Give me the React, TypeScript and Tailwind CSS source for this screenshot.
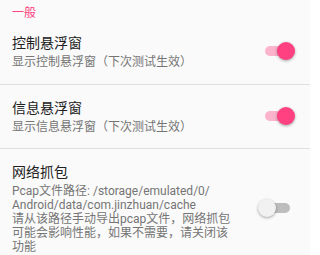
import type { ReactNode } from "react";

function Interruptor({ on }: { on: boolean }) {
  return (
    <div className="relative h-[20px] w-[38px] shrink-0">
      <div
        className={
          "absolute left-[8px] top-[5px] h-[10px] w-[25px] rounded-full " +
          (on ? "bg-[#fcb3cc]" : "bg-[#bdbdbd]")
        }
      />
      <div
        className={
          "absolute top-[1px] h-[18px] w-[18px] rounded-full shadow-[0_1px_3px_rgba(0,0,0,0.35)] " +
          (on ? "left-[20px] bg-[#ff4081]" : "left-[1px] bg-[#f1f1f1]")
        }
      />
    </div>
  );
}

function Preferencia({
  titulo,
  children,
  on,
  className,
}: {
  titulo: string;
  children: ReactNode;
  on: boolean;
  className: string;
}) {
  return (
    <div className={"flex items-center pl-[12px] pr-[15px] " + className}>
      <div className="flex-1">
        <div className="text-[14px] leading-[20px] text-[#212121]">{titulo}</div>
        <div className="mt-[2px] text-[12px] leading-[14px] text-[#757575]">{children}</div>
      </div>
      <Interruptor on={on} />
    </div>
  );
}

export default function App() {
  return (
    <div className="h-[255px] w-[310px] overflow-hidden bg-[#fafafa] font-['Roboto','Noto_Sans_CJK_SC',sans-serif]">
      <div className="pl-[12px] pt-[6px] text-[12px] leading-[14px] text-[#ff4081]">一般</div>
      <Preferencia titulo="控制悬浮窗" on className="pt-[13px] pb-[15px]">
        显示控制悬浮窗（下次测试生效）
      </Preferencia>
      <div className="h-px bg-[#e0e0e0]" />
      <Preferencia titulo="信息悬浮窗" on className="pt-[13px] pb-[14px]">
        显示信息悬浮窗（下次测试生效）
      </Preferencia>
      <div className="h-px bg-[#e0e0e0]" />
      <Preferencia titulo="网络抓包" on={false} className="pt-[13px] pb-[14px]">
        Pcap文件路径: /storage/emulated/0/
        <br />
        Android/data/com.jinzhuan/cache
        <br />
        请从该路径手动导出pcap文件，网络抓包
        <br />
        可能会影响性能，如果不需要，请关闭该
        <br />
        功能
      </Preferencia>
    </div>
  );
}
